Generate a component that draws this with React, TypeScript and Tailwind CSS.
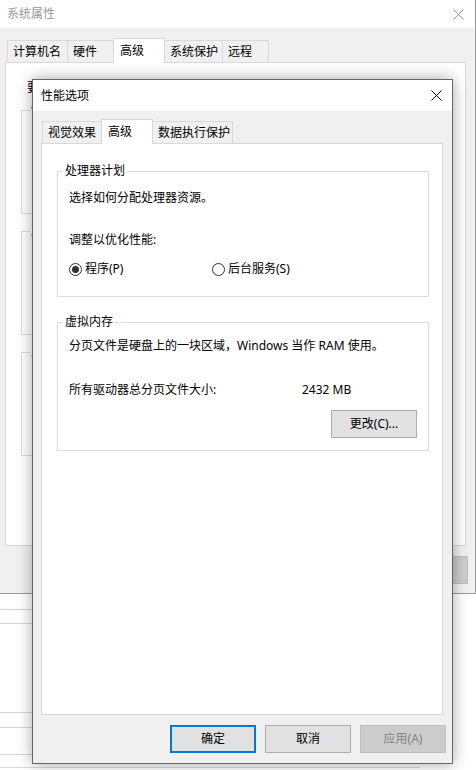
import React from 'react'

const FONT = "font-['Noto_Sans','Noto_Sans_CJK_SC',sans-serif]"

type TabProps = {
  label: string
  width: string
  selected?: boolean
  first?: boolean
}

const Tab: React.FC<TabProps> = ({ label, width, selected, first }) => (
  <div
    className={[
      'flex border border-b-0 border-[#d9d9d9] text-[12px] leading-[16px] text-black',
      width,
      first ? '' : '-ml-px',
      selected ? 'relative z-10 h-[25px] -mb-px bg-white pl-[6px] pt-[4px]' : 'h-[22px] bg-[#f0f0f0] pl-[5px] pt-[3px]',
    ].join(' ')}
  >
    {label}
  </div>
)

const CloseIcon: React.FC<{ color: string }> = ({ color }) => (
  <svg width="11" height="11" viewBox="0 0 11 11">
    <path d="M0.5 0.5 L10.5 10.5 M10.5 0.5 L0.5 10.5" stroke={color} strokeWidth="1" fill="none" />
  </svg>
)

const Radio: React.FC<{ checked?: boolean; label: string; className?: string }> = ({ checked, label, className }) => (
  <div className={`flex items-center gap-[3px] ${className ?? ''}`}>
    <span className="flex h-[13px] w-[13px] items-center justify-center rounded-full border border-[#333] bg-white">
      {checked && <span className="h-[7px] w-[7px] rounded-full bg-[#333]" />}
    </span>
    <span className="leading-[16px]">{label}</span>
  </div>
)

const WinButton: React.FC<{ label: string; variant?: 'default' | 'primary' | 'disabled' }> = ({ label, variant = 'default' }) => {
  const styles = {
    default: 'border border-[#adadad] bg-[#e1e1e1] text-black',
    primary: 'border-2 border-[#0078d7] bg-[#e1e1e1] text-black',
    disabled: 'border border-[#bfbfbf] bg-[#cccccc] text-[#838383]',
  }
  return (
    <div className={`flex h-[28px] w-[86px] items-center justify-center text-[12px] leading-[16px] ${styles[variant]}`}>
      {label}
    </div>
  )
}

// only the left strip of this window peeks out from under the dialog
const BackgroundWindow: React.FC = () => (
  <div className="flex h-[594px] w-[476px] shrink-0 flex-col border-r border-b border-[#9a9a9a] bg-[#f0f0f0] shadow-[0_2px_8px_rgba(0,0,0,0.25)]">
    <div className="flex h-[28px] items-center justify-between bg-white pl-[7px] pr-[11px]">
      <span className="text-[12px] leading-[16px] text-[#999]">系统属性</span>
      <CloseIcon color="#999" />
    </div>
    <div className="flex flex-1 flex-col pt-[9px]">
      <div className="flex h-[25px] items-end pl-[7px]">
        <Tab label="计算机名" width="w-[61px]" first />
        <Tab label="硬件" width="w-[47px]" />
        <Tab label="高级" width="w-[52px]" selected />
        <Tab label="系统保护" width="w-[59px]" />
        <Tab label="远程" width="w-[47px]" />
      </div>
      <div className="ml-[5px] flex h-[484px] w-[461px] flex-col border border-[#dadada] bg-white pl-[15px] pt-[17px]">
        <div className="pl-[6px] text-[12px] leading-[16px]">要</div>
        <div className="mt-[14px] flex flex-col gap-[17px]">
          {['性', '用', '启'].map((t) => (
            <div key={t} className="h-[104px] w-[430px] border border-[#dcdcdc] pl-[8px]">
              <span className="-mt-[9px] block w-fit bg-white px-[1px] text-[12px] leading-[16px]">{t}</span>
            </div>
          ))}
        </div>
      </div>
      <div className="flex justify-end gap-[9px] pr-[7px] pt-[10px]">
        <WinButton label="确定" />
        <WinButton label="取消" />
        <WinButton label="应用(A)" variant="disabled" />
      </div>
    </div>
  </div>
)

const Desktop: React.FC = () => (
  <div className="flex flex-1 flex-col bg-white">
    <div className="mt-[15px] h-px w-[40px] bg-[#d3d6df]" />
    <div className="mt-[13px] h-px w-[40px] bg-[#d3d6df]" />
    <div className="mt-[88px] h-px w-[40px] bg-[#d3d6df]" />
    <div className="mt-[14px] h-px w-[40px] bg-[#d3d6df]" />
    <div className="mt-[26px] h-px w-[40px] bg-[#d3d6df]" />
    <div className="mt-[12px] h-px w-[420px] bg-[#d9d9d9]" />
  </div>
)

const PerformanceDialog: React.FC = () => (
  <div className="absolute left-[32px] top-[79px] flex h-[685px] w-[421px] flex-col border border-[#666] bg-[#f0f0f0] text-[12px] text-black shadow-[0_0_14px_rgba(0,0,0,0.35)]">
    <div className="flex h-[31px] items-center justify-between bg-white pl-[8px] pr-[10px]">
      <span className="leading-[16px]">性能选项</span>
      <CloseIcon color="#000" />
    </div>
    <div className="flex flex-1 flex-col pt-[8px]">
      <div className="flex h-[24px] items-end pl-[9px]">
        <Tab label="视觉效果" width="w-[60px]" first />
        <Tab label="高级" width="w-[52px]" selected />
        <Tab label="数据执行保护" width="w-[81px]" />
      </div>
      <div className="ml-[8px] flex h-[572px] w-[402px] flex-col border border-[#d9d9d9] bg-white pl-[15px] pt-[27px]">
        <div className="relative w-[372px] border border-[#dcdcdc] pl-[11px] pb-[19px]">
          <span className="absolute -top-[9px] left-[5px] bg-white px-[2px] leading-[16px]">处理器计划</span>
          <div className="mt-[18px] leading-[16px]">选择如何分配处理器资源。</div>
          <div className="mt-[26px] leading-[16px]">调整以优化性能:</div>
          <div className="mt-[13px] flex">
            <Radio checked label="程序(P)" className="w-[143px]" />
            <Radio label="后台服务(S)" />
          </div>
        </div>
        <div className="relative mt-[25px] w-[372px] border border-[#dcdcdc] pl-[11px] pr-[11px] pb-[12px]">
          <span className="absolute -top-[9px] left-[5px] bg-white px-[2px] leading-[16px]">虚拟内存</span>
          <div className="mt-[15px] leading-[16px]">分页文件是硬盘上的一块区域，Windows 当作 RAM 使用。</div>
          <div className="mt-[28px] flex leading-[16px]">
            <span className="w-[233px]">所有驱动器总分页文件大小:</span>
            <span>2432 MB</span>
          </div>
          <div className="mt-[12px] flex justify-end">
            <WinButton label="更改(C)..." />
          </div>
        </div>
      </div>
      <div className="flex justify-end gap-[9px] pr-[6px] pt-[10px]">
        <WinButton label="确定" variant="primary" />
        <WinButton label="取消" />
        <WinButton label="应用(A)" variant="disabled" />
      </div>
    </div>
  </div>
)

export default function App() {
  return (
    <div className={`relative flex h-[770px] w-[476px] flex-col overflow-hidden bg-white ${FONT}`}>
      <BackgroundWindow />
      <Desktop />
      <PerformanceDialog />
    </div>
  )
}
